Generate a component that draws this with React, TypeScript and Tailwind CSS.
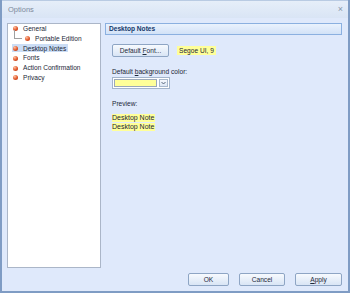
import type { ReactNode } from 'react';

const Bullet = () => (
  <span className="inline-block w-[5px] h-[5px] rounded-full shrink-0 bg-[radial-gradient(circle_at_35%_30%,#ffc2a0,#e0562a_55%,#a8300f)]" />
);

function TreeItem({ label, selected, indent }: { label: string; selected?: boolean; indent?: boolean }) {
  return (
    <div className={`relative flex items-center h-[9.8px] ${indent ? 'pl-[15px]' : 'pl-[3px]'}`}>
      {indent && (
        <span className="absolute left-[5px] top-[-4px] w-[8px] h-[9px] border-l border-b border-[#a0a0a0]" />
      )}
      <div className={`flex items-center h-[8px] pr-[2px] pl-[1px] ${selected ? 'bg-[#cbddf5]' : ''}`}>
        <Bullet />
        <span className="ml-[5px] whitespace-nowrap">{label}</span>
      </div>
    </div>
  );
}

function Btn({ children, w }: { children: ReactNode; w: string }) {
  return (
    <div
      className={`${w} h-[13px] flex items-center justify-center rounded-[2px] border border-[#8ea5c4] bg-gradient-to-b from-[#f7fafe] to-[#d9e5f5] text-[#1e2a3a]`}
    >
      {children}
    </div>
  );
}

export default function App() {
  return (
    <div
      className="w-[350px] h-[293px] flex flex-col bg-[#dfe9fb] border-x-2 border-b-2 border-[#7f9cc4] text-[6.6px] text-[#1b2636]"
      style={{ fontFamily: '"Segoe UI", "Liberation Sans", Arial, sans-serif' }}
    >
      {/* title bar */}
      <div className="h-[18px] flex items-center justify-between pl-[6px] pr-[5px] bg-gradient-to-b from-[#e6eef9] to-[#d9e5f5] border-t border-[#b9cbe3]">
        <span className="text-[7.5px] text-[#7d8a9c]">Options</span>
        <span className="text-[9px] text-[#8796aa] leading-none">×</span>
      </div>

      <div className="flex-1 flex flex-col pt-[5px] pl-[5px] pr-[6px]">
        <div className="h-[245px] flex gap-[4px]">
          {/* tree */}
          <div className="w-[94px] bg-white border border-[#abb6c8] pt-0 pl-[1px]">
            <TreeItem label="General" />
            <TreeItem label="Portable Edition" indent />
            <TreeItem label="Desktop Notes" selected />
            <TreeItem label="Fonts" />
            <TreeItem label="Action Confirmation" />
            <TreeItem label="Privacy" />
          </div>

          {/* page */}
          <div className="flex-1 flex flex-col">
            <div className="h-[12px] flex items-center pl-[3px] border border-[#8bb0e0] bg-gradient-to-b from-[#eaf2fd] to-[#d2e2f7] font-bold text-[#15396b]">
              Desktop Notes
            </div>
            <div className="pl-[7px] pt-[9px] flex flex-col">
              <div className="flex items-center">
                <Btn w="w-[57px]">
                  <span>
                    Default <span className="underline">F</span>ont...
                  </span>
                </Btn>
                <span className="ml-[8px] px-[2px] h-[9px] flex items-center bg-[#ffff99]">Segoe UI, 9</span>
              </div>
              <div className="mt-[10px] leading-[9px]">
                Default <span className="underline">b</span>ackground color:
              </div>
              <div className="mt-[1px] w-[58px] h-[12px] flex items-center bg-white border border-[#a3b5cc] p-[1px] gap-[2px]">
                <div className="flex-1 h-full bg-[#ffff99] border border-[#9aa8bb]" />
                <div className="w-[9px] h-full flex items-center justify-center border border-[#a8b8cc] bg-gradient-to-b from-[#f6f9fd] to-[#dde7f4]">
                  <svg width="5" height="4" viewBox="0 0 5 4">
                    <path d="M0.5 1 L2.5 3 L4.5 1" stroke="#4a5a70" strokeWidth="0.9" fill="none" />
                  </svg>
                </div>
              </div>
              <div className="mt-[10px] leading-[9px]">Preview:</div>
              <div className="mt-[6px] flex flex-col items-start gap-[1px] text-[7px]">
                <span className="bg-[#ffff99] h-[8px] leading-[8px] pr-[1px]">Desktop Note</span>
                <span className="bg-[#ffff99] h-[8px] leading-[8px] pr-[1px]">Desktop Note</span>
              </div>
            </div>
          </div>
        </div>

        {/* buttons */}
        <div className="mt-[5px] flex justify-end">
          <Btn w="w-[41px]">OK</Btn>
          <div className="w-[10px]" />
          <Btn w="w-[46px]">Cancel</Btn>
          <div className="w-[10px]" />
          <Btn w="w-[47px]">
            <span>
              <span className="underline">A</span>pply
            </span>
          </Btn>
        </div>
      </div>
    </div>
  );
}
